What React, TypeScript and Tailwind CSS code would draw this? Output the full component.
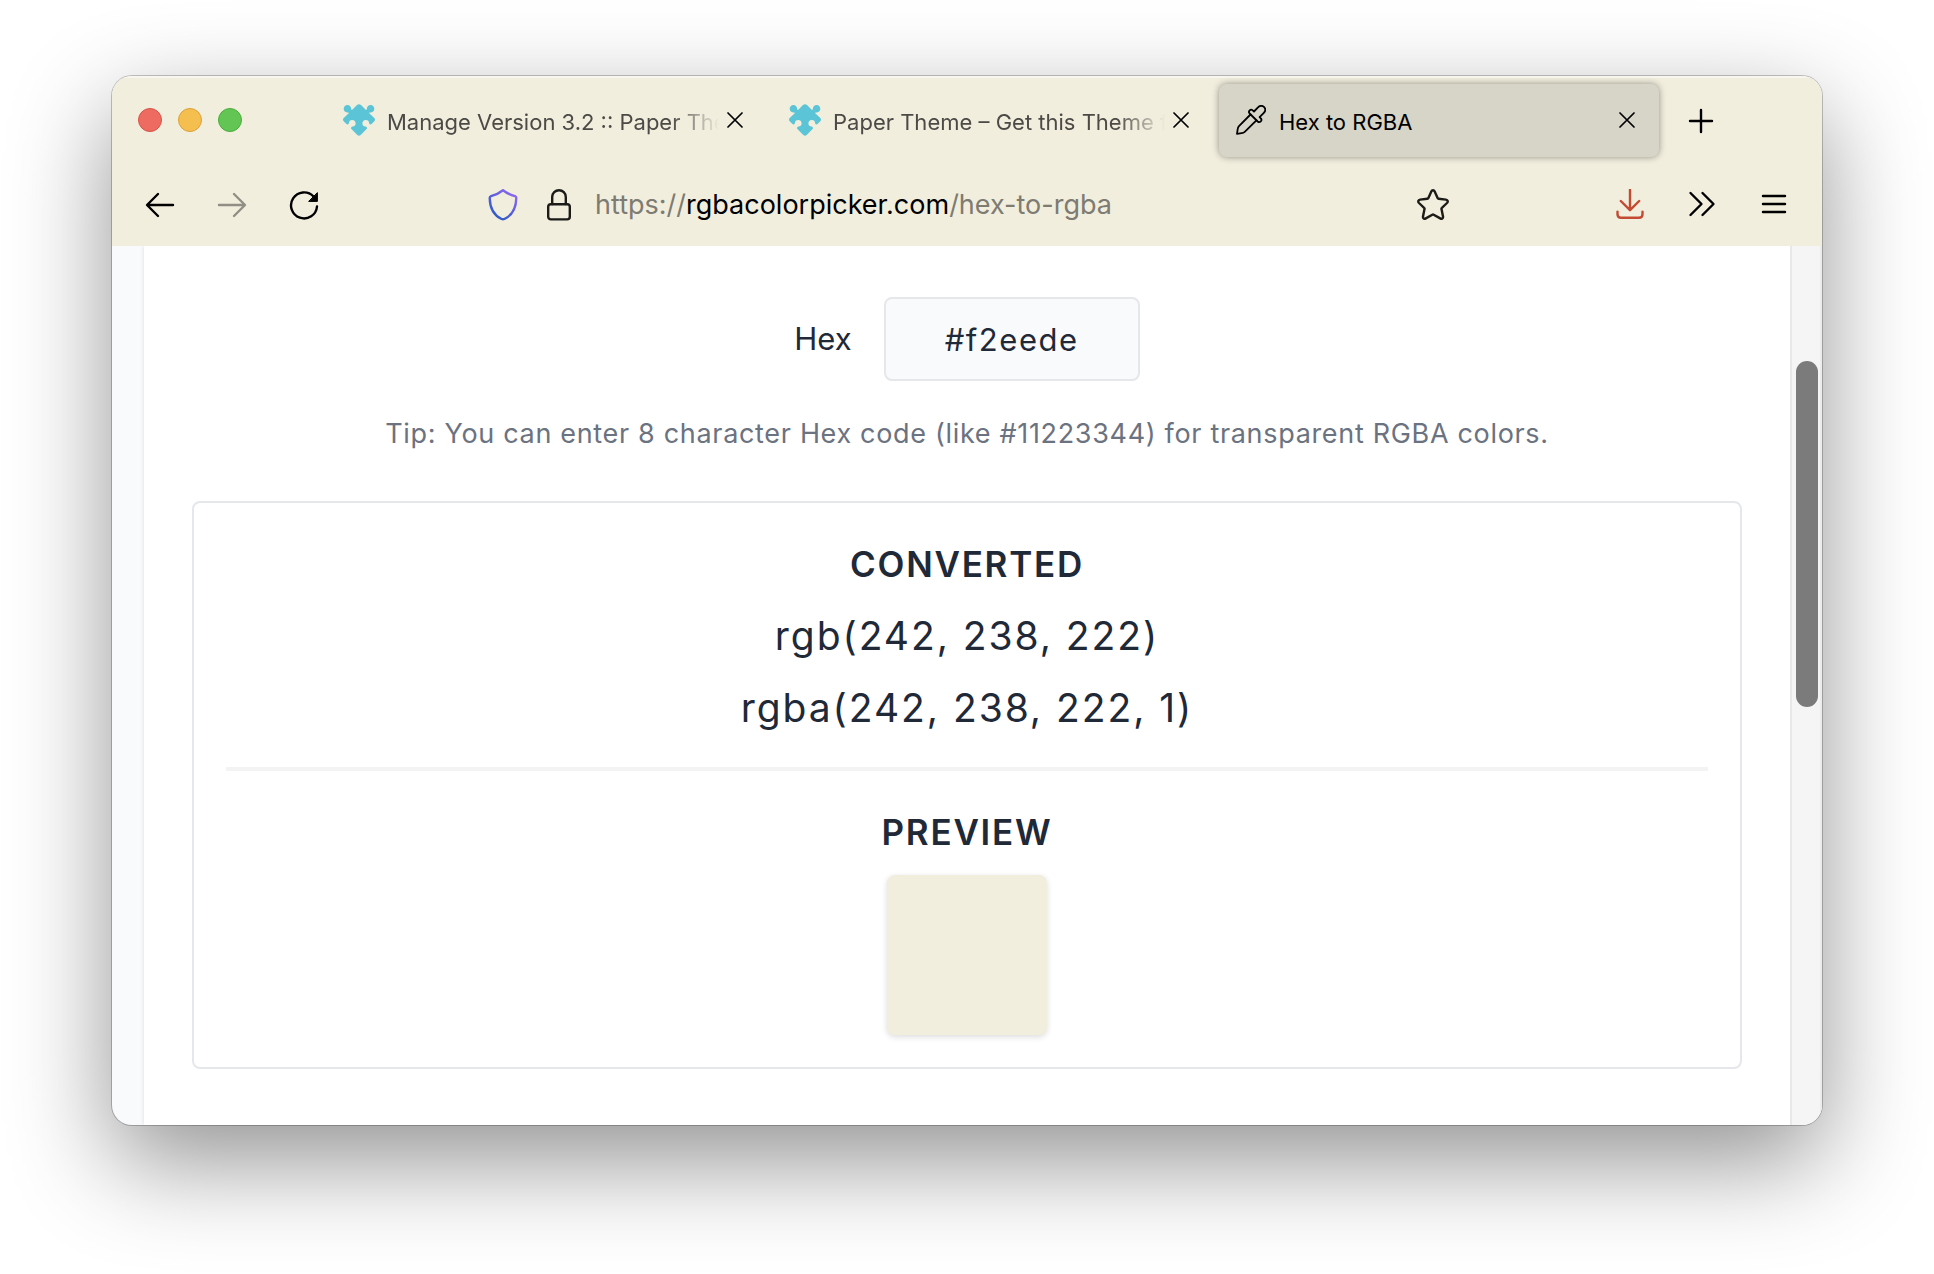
import { useState } from "react";
import type { ReactNode } from "react";

function PuzzleIcon() {
  return (
    <svg viewBox="0 0 94 94" className="size-8 shrink-0" fill="#5bc5d7" aria-hidden="true">
      <path d="M41 3Q47 -2 53 3L66 16Q69 19 70 15A11 11 0 1 1 79 25Q75 26 78 28L92 41Q96 46 92 51L84 59Q79 62 77 57Q76 47 67 47Q57 48 57 58Q58 66 66 66Q72 67 70 73L52 91Q47 95 42 91L24 73Q22 67 28 66Q36 66 37 58Q37 48 27 47Q18 47 17 57Q15 62 10 59L2 51Q-2 46 2 41L16 28Q19 26 15 25A11 11 0 1 1 24 15Q25 19 28 16Z" />
    </svg>
  );
}

function EyedropperIcon() {
  return (
    <svg
      viewBox="0 0 30 30"
      className="mx-px size-[30px] shrink-0"
      fill="none"
      stroke="currentColor"
      strokeWidth="1.8"
      strokeLinecap="round"
      strokeLinejoin="round"
      aria-hidden="true"
    >
      <path d="M14.5 9.5 3.2 20.8Q1.8 22.2 1.7 24.2L1 28.8 5.6 28.2Q7.6 28.1 9 26.7L20.4 15.3" />
      <path d="M13.6 8.5C11.8 6.4 14.6 3.4 16.7 5.3L18 6.5 22 2.4C24 0.5 26.5 0.6 28.2 2.2 29.8 4 29.5 6.3 27.6 8.2L23.6 12.1 24.8 13.4C26.7 15.6 23.8 18.3 21.7 16.5Z" />
    </svg>
  );
}

function CloseIcon() {
  return (
    <svg viewBox="0 0 16 16" className="size-4" fill="none" stroke="currentColor" strokeWidth="1.7" strokeLinecap="round" aria-hidden="true">
      <path d="M1 1 15 15M15 1 1 15" />
    </svg>
  );
}

function LineIcon({ children }: { children: ReactNode }) {
  return (
    <svg
      viewBox="0 0 32 32"
      className="size-8"
      fill="none"
      stroke="currentColor"
      strokeWidth="2.4"
      strokeLinecap="round"
      strokeLinejoin="round"
      aria-hidden="true"
    >
      {children}
    </svg>
  );
}

function Tab({ title, icon, active = false }: { title: string; icon: ReactNode; active?: boolean }) {
  return (
    <div
      className={`flex h-[73px] min-w-0 flex-1 items-center rounded-lg px-4 ${
        active ? "bg-[#d7d5c7] text-black shadow-[0_0_7px_rgba(0,0,0,0.4)]" : "text-[#4b4a46]"
      }`}
    >
      <button role="tab" aria-selected={active} className="flex min-w-0 flex-1 items-center gap-3 text-left">
        {icon}
        <span
          className={`min-w-0 flex-1 overflow-hidden whitespace-nowrap pt-1 text-[22px] leading-8 ${
            active ? "" : "[mask-image:linear-gradient(to_left,transparent,black_48px)]"
          }`}
        >
          {title}
        </span>
      </button>
      <button aria-label={`Close ${title}`} className="flex size-8 shrink-0 items-center justify-center text-black">
        <CloseIcon />
      </button>
    </div>
  );
}

function NavButton({ label, children, className = "" }: { label: string; children: ReactNode; className?: string }) {
  return (
    <button aria-label={label} className={`flex h-16 w-[72px] shrink-0 items-center justify-center ${className}`}>
      {children}
    </button>
  );
}

function TabBar() {
  return (
    <div className="flex h-[88px] items-center pl-[26px]">
      <div className="flex w-[189px] shrink-0 gap-4">
        <button aria-label="Close window" className="size-6 rounded-full border border-[#d9534a] bg-[#ed6b60]" />
        <button aria-label="Minimize window" className="size-6 rounded-full border border-[#dba23c] bg-[#f5bf4f]" />
        <button aria-label="Zoom window" className="size-6 rounded-full border border-[#4bae3c] bg-[#62c554]" />
      </div>
      <div role="tablist" className="flex min-w-0 flex-1 gap-1.5">
        <Tab title="Manage Version 3.2 :: Paper Theme" icon={<PuzzleIcon />} />
        <Tab title="Paper Theme – Get this Theme for Firefox" icon={<PuzzleIcon />} />
        <Tab title="Hex to RGBA" active icon={<EyedropperIcon />} />
      </div>
      <button aria-label="New tab" className="mr-[79px] flex h-16 w-[84px] shrink-0 items-center justify-center">
        <LineIcon>
          <path d="M16 6V28M5 17H27" />
        </LineIcon>
      </button>
    </div>
  );
}

function NavBar() {
  return (
    <div className="flex h-[82px] items-center px-3">
      <NavButton label="Back">
        <LineIcon>
          <path d="M29 16H3.5M14 5 3 16 14 27" />
        </LineIcon>
      </NavButton>
      <NavButton label="Forward" className="text-[#918f85]">
        <LineIcon>
          <path d="M3 16H28.5M18 5 29 16 18 27" />
        </LineIcon>
      </NavButton>
      <NavButton label="Reload">
        <LineIcon>
          <path d="M25.5 7.5A13 13 0 1 0 29 17.5" />
          <path d="M29.4 4V12.4H21Z" fill="currentColor" strokeWidth="1" />
        </LineIcon>
      </NavButton>
      <div className="mx-[143px] flex min-w-0 flex-1 items-center">
        <button aria-label="Tracking protection" className="flex w-10 shrink-0 justify-center">
          <LineIcon>
            <defs>
              <linearGradient id="shield" x1="1" y1="0" x2="0.2" y2="1">
                <stop offset="0" stopColor="#9a6bf5" />
                <stop offset="0.5" stopColor="#5f5fdf" />
                <stop offset="1" stopColor="#2a5bc4" />
              </linearGradient>
            </defs>
            <path
              stroke="url(#shield)"
              d="M16 1.2C12.5 4 8 6 4 7.2Q2.7 7.7 2.7 9C2.9 18 6 26 14.6 30Q16 30.6 17.4 30C26 26 29.1 18 29.3 9Q29.3 7.7 28 7.2C24 6 19.5 4 16 1.2Z"
            />
          </LineIcon>
        </button>
        <button aria-label="Site security" className="ml-4 flex w-10 shrink-0 justify-center text-[#1c1b18]">
          <LineIcon>
            <rect x="5.2" y="15.2" width="21.6" height="15.2" rx="2.6" />
            <path d="M9.2 15V8A6.8 6.8 0 0 1 22.8 8V15" />
          </LineIcon>
        </button>
        <div
          role="textbox"
          aria-label="Address"
          className="ml-4 min-w-0 flex-1 overflow-hidden whitespace-nowrap text-[27px] leading-10 text-[#7d7b72]"
        >
          https://<span className="text-black">rgbacolorpicker.com</span>/hex-to-rgba
        </div>
        <button aria-label="Bookmark this page" className="flex w-9 shrink-0 justify-center text-[#1c1b18]">
          <LineIcon>
            <path d="M14.3 2.4C15 0.9 17 0.9 17.7 2.4L20.6 9Q20.9 9.7 21.7 9.8L28.9 10.6C30.8 10.9 31.3 12.7 30 14L24.9 18.8Q24.3 19.3 24.5 20.1L26 27.5C26.3 29.3 24.7 30.3 23.2 29.4L16.7 25.7Q16 25.3 15.3 25.7L8.8 29.4C7.3 30.3 5.7 29.3 6 27.5L7.5 20.1Q7.7 19.3 7.1 18.8L2 14C0.7 12.7 1.2 10.9 3.1 10.6L10.3 9.8Q11.1 9.7 11.4 9Z" />
          </LineIcon>
        </button>
      </div>
      <NavButton label="Downloads" className="text-[#c44b33]">
        <LineIcon>
          <path d="M16 0.8V20.8M6.8 12 16 21.2 25.2 12M3.5 22.6V25.3Q3.5 28.8 7 28.8H25Q28.5 28.8 28.5 25.3V22.6" />
        </LineIcon>
      </NavButton>
      <NavButton label="More tools">
        <LineIcon>
          <path d="M4.5 4 15.5 15 4.5 26M16.5 4 27.5 15 16.5 26" />
        </LineIcon>
      </NavButton>
      <NavButton label="Open menu">
        <LineIcon>
          <path d="M5 7H27M5 15H27M5 23H27" />
        </LineIcon>
      </NavButton>
    </div>
  );
}

function Converter() {
  const [hex, setHex] = useState("#f2eede");
  return (
    <main className="min-w-0 flex-1 bg-white px-12 pt-[51px] pb-14 text-center text-[#1f2937] shadow-[0_0_4px_rgba(0,0,0,0.12)]">
      <div className="flex items-center justify-center gap-8">
        <label htmlFor="hex" className="text-[31px]">
          Hex
        </label>
        <input
          id="hex"
          value={hex}
          onChange={(event) => setHex(event.target.value)}
          className="h-[84px] w-64 rounded-lg border-2 border-[#e5e7eb] bg-[#f9fafc] text-center text-[31px] tracking-wider outline-none"
        />
      </div>
      <p className="mt-7 text-[27px] leading-[50px] tracking-wide text-[#6b7280]">
        Tip: You can enter 8 character Hex code (like #11223344) for transparent RGBA colors.
      </p>
      <section className="mt-[42px] rounded-lg border-2 border-[#e5e7eb] px-8 pt-[25px] pb-8">
        <h2 className="text-[35px] leading-[72px] font-semibold tracking-wider">CONVERTED</h2>
        <p className="text-[39px] leading-[72px] tracking-wider">rgb(242, 238, 222)</p>
        <p className="text-[39px] leading-[72px] tracking-wider">rgba(242, 238, 222, 1)</p>
        <hr className="mt-[23px] mb-[25px] h-1 border-0 bg-[#f3f3f4]" />
        <h2 className="text-[35px] leading-[72px] font-semibold tracking-wider">PREVIEW</h2>
        <div className="mx-auto mt-[7px] size-40 rounded-lg bg-[#f2eede] shadow-[0_2px_6px_rgba(0,0,0,0.14)]" />
      </section>
    </main>
  );
}

export default function App() {
  return (
    <div className="min-h-screen bg-white px-28 pt-[76px] pb-[148px] font-['Inter',sans-serif]">
      <div className="overflow-hidden rounded-[20px] bg-[#f9fafc] shadow-[0_0_0_1px_rgba(0,0,0,0.22),0_36px_100px_rgba(0,0,0,0.43)]">
        <header className="relative bg-[#f2eede] text-black shadow-[inset_0_2px_0_rgba(255,255,255,0.45)]">
          <TabBar />
          <NavBar />
        </header>
        <div className="flex pl-8">
          <Converter />
          <div className="w-8 shrink-0 border-x-2 border-l-[#e8e8e8] border-r-[#ececec] bg-[#f5f5f5] px-1 pt-[115px]">
            <div className="h-[346px] w-[22px] rounded-full bg-[#7b7b7b]" />
          </div>
        </div>
      </div>
    </div>
  );
}
